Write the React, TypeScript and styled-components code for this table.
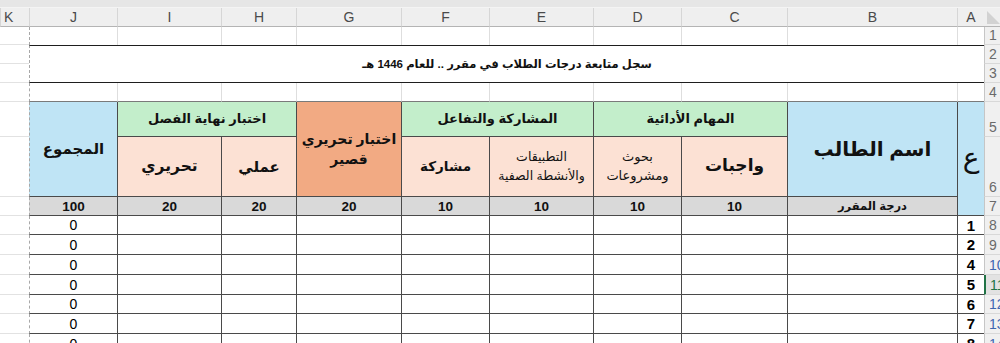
import React from 'react';
import styled, { createGlobalStyle, css } from 'styled-components';

const GlobalStyle = createGlobalStyle`
  html, body { margin: 0; padding: 0; background: #fff; }
  body { font-family: 'Liberation Sans', 'DejaVu Sans', sans-serif; }
`;

// right to left: row header, A .. K
const COLS = [16, 27, 170, 106, 88, 104, 88, 105, 75, 104, 88, 29];
const ROWS = [19, 18, 19, 19, 19, 35, 60, 19, 19, 20, 20, 20, 19, 20, 20];
const LETTERS = ['', 'A', 'B', 'C', 'D', 'E', 'F', 'G', 'H', 'I', 'J', 'K'];

const INK = '#4a4a4a';
const GRID = '#dedede';

const fills = {
  blue: '#bfe4f5',
  green: '#c3eecb',
  peach: '#fce1d4',
  orange: '#f2aa83',
  gray: '#d9d9d9',
};
type Fill = keyof typeof fills;

type Spot = { $c: number; $r: number; $cs?: number; $rs?: number; $edge?: boolean };

const Frame = styled.div`
  width: 1000px;
  height: 343px;
  overflow: hidden;
  background: #fff;
`;

const TopStrip = styled.div`
  height: 8px;
  box-sizing: border-box;
  background: #e6e6e6;
  border-bottom: 1px solid #f4f4f4;
`;

const Sheet = styled.div`
  display: grid;
  direction: rtl;
  grid-template-columns: ${COLS.map((w) => `${w}px`).join(' ')};
  grid-template-rows: ${ROWS.map((h) => `${h}px`).join(' ')};
`;

const Place = styled.div<Spot>`
  grid-column: ${(p) => p.$c} / span ${(p) => p.$cs ?? 1};
  grid-row: ${(p) => p.$r} / span ${(p) => p.$rs ?? 1};
  box-sizing: border-box;
  min-width: 0;
  min-height: 0;
  overflow: hidden;
  display: flex;
  align-items: center;
  justify-content: center;
`;

// dashed page break that runs down the left side of column J
const pageEdge = css<Spot>`
  ${(p) => p.$edge && 'border-left: 1px dashed #a8a8a8;'}
`;

const ColLetter = styled(Place)<{ $start?: boolean }>`
  background: #efefef;
  border-left: 1px solid #d6d6d6;
  border-bottom: 1px solid #b4b4b4;
  color: #4a4a4a;
  font-size: 14px;
  direction: ltr;
  justify-content: ${(p) => (p.$start ? 'flex-start' : 'center')};
  padding-left: ${(p) => (p.$start ? '3px' : '0')};
`;

const Corner = styled(Place)`
  background: #efefef;
  border-bottom: 1px solid #b4b4b4;
  direction: ltr;
  justify-content: flex-start;
  align-items: flex-end;
  padding: 0 0 2px 3px;
`;

const SelectAll = styled.span`
  width: 0;
  height: 0;
  border-bottom: 13px solid #d2d2d2;
  border-right: 13px solid transparent;
`;

const RowNum = styled(Place)<{ $tone?: 'plain' | 'blue' | 'active' }>`
  background: ${(p) => (p.$tone === 'active' ? '#e2e2e2' : '#f0f0f0')};
  border-left: ${(p) => (p.$tone === 'active' ? '2px solid #217346' : '1px solid #c6c6c6')};
  border-bottom: 1px solid #d8d8d8;
  direction: ltr;
  justify-content: flex-start;
  align-items: flex-end;
  padding: 0 0 1px 4px;
  white-space: nowrap;
  font-size: 14px;
  color: ${(p) => (p.$tone === 'blue' ? '#3f66b0' : p.$tone === 'active' ? '#217346' : '#6a6a6a')};
`;

const BlankCell = styled(Place)<{ $under?: string }>`
  background: #fff;
  border-left: 1px solid ${GRID};
  border-bottom: ${(p) => (p.$under ? `1px solid ${p.$under}` : 'none')};
  ${pageEdge}
`;

const OffPage = styled(Place)`
  background: #fff;
  border-bottom: 1px solid #e2e2e2;
`;

const Title = styled(Place)`
  background: #fff;
  border-top: 1px solid #1e1e1e;
  border-bottom: 1px solid #1e1e1e;
  font-size: 11.5px;
  font-weight: 700;
  color: #111;
  ${pageEdge}
`;

const HeadCell = styled(Place)<{ $fill: Fill; $size?: number; $weight?: number }>`
  background: ${(p) => fills[p.$fill]};
  border-left: 1px solid ${INK};
  border-bottom: 1px solid ${INK};
  font-size: ${(p) => p.$size ?? 13}px;
  font-weight: ${(p) => p.$weight ?? 700};
  line-height: 1.45;
  text-align: center;
  white-space: nowrap;
  color: #111;
  padding: 0 2px;
  ${pageEdge}
`;

const MaxCell = styled(Place)<{ $small?: boolean }>`
  background: ${fills.gray};
  border-left: 1px solid ${INK};
  border-bottom: 1px solid ${INK};
  font-size: ${(p) => (p.$small ? 11.5 : 13.5)}px;
  font-weight: 700;
  color: #111;
  ${pageEdge}
`;

const DataCell = styled(Place)<{ $bold?: boolean }>`
  background: #fff;
  border-left: 1px solid ${INK};
  border-bottom: 1px solid ${INK};
  font-size: ${(p) => (p.$bold ? 15 : 14)}px;
  font-weight: ${(p) => (p.$bold ? 700 : 400)};
  color: #000;
  ${pageEdge}
`;

type Head = { c: number; r: number; cs?: number; rs?: number; fill: Fill; size?: number; weight?: number; lines: string[] };

const HEADS: Head[] = [
  { c: 11, r: 6, rs: 2, fill: 'blue', size: 15, lines: ['المجموع'] },
  { c: 9, r: 6, cs: 2, fill: 'green', size: 13, lines: ['اختبار نهاية الفصل'] },
  { c: 10, r: 7, fill: 'peach', size: 15.5, lines: ['تحريري'] },
  { c: 9, r: 7, fill: 'peach', size: 15, lines: ['عملي'] },
  { c: 8, r: 6, rs: 2, fill: 'orange', size: 14, lines: ['اختبار تحريري', 'قصير'] },
  { c: 6, r: 6, cs: 2, fill: 'green', size: 13, lines: ['المشاركة والتفاعل'] },
  { c: 7, r: 7, fill: 'peach', size: 13.5, lines: ['مشاركة'] },
  { c: 6, r: 7, fill: 'peach', size: 12.5, weight: 400, lines: ['التطبيقات', 'والأنشطة الصفية'] },
  { c: 4, r: 6, cs: 2, fill: 'green', size: 13, lines: ['المهام الأدائية'] },
  { c: 5, r: 7, fill: 'peach', size: 13, weight: 400, lines: ['بحوث', 'ومشروعات'] },
  { c: 4, r: 7, fill: 'peach', size: 17, lines: ['واجبات'] },
  { c: 3, r: 6, rs: 2, fill: 'blue', size: 20, lines: ['اسم الطالب'] },
  { c: 2, r: 6, rs: 3, fill: 'blue', size: 28, weight: 400, lines: ['ع'] },
];

const MAX = ['100', '20', '20', '20', '10', '10', '10', '10'];
const INDEX = [1, 2, 4, 5, 6, 7, 8];
const rowTone = (n: number) => (n === 11 ? 'active' : n >= 10 ? 'blue' : 'plain');

export default function App() {
  return (
    <Frame>
      <GlobalStyle />
      <TopStrip />
      <Sheet>
        <Corner $c={1} $r={1}>
          <SelectAll />
        </Corner>
        {LETTERS.slice(1).map((l, i) => (
          <ColLetter key={l} $c={i + 2} $r={1} $start={l === 'K'}>
            {l}
          </ColLetter>
        ))}

        {ROWS.slice(1).map((_, i) => (
          <RowNum key={`n${i}`} $c={1} $r={i + 2} $tone={rowTone(i + 1)}>
            {i + 1}
          </RowNum>
        ))}
        {ROWS.slice(1).map((_, i) => (
          <OffPage key={`k${i}`} $c={12} $r={i + 2} />
        ))}

        {LETTERS.slice(1, 11).map((l, i) => (
          <BlankCell key={`r1${l}`} $c={i + 2} $r={2} $edge={l === 'J'} />
        ))}
        <Title $c={2} $cs={10} $r={3} $rs={2} $edge>
          سجل متابعة درجات الطلاب في مقرر .. للعام 1446 هـ
        </Title>
        {LETTERS.slice(1, 11).map((l, i) => (
          <BlankCell key={`r4${l}`} $c={i + 2} $r={5} $edge={l === 'J'} $under="#7a7a7a" />
        ))}

        {HEADS.map((h) => (
          <HeadCell
            key={`${h.c}-${h.r}`}
            $c={h.c}
            $r={h.r}
            $cs={h.cs}
            $rs={h.rs}
            $edge={h.c === 11}
            $fill={h.fill}
            $size={h.size}
            $weight={h.weight}
          >
            <div>
              {h.lines.map((t) => (
                <div key={t}>{t}</div>
              ))}
            </div>
          </HeadCell>
        ))}

        {MAX.map((v, i) => (
          <MaxCell key={`m${i}`} $c={11 - i} $r={8} $edge={i === 0}>
            {v}
          </MaxCell>
        ))}
        <MaxCell $c={3} $r={8} $small>
          درجة المقرر
        </MaxCell>

        {INDEX.map((n, ri) => (
          <React.Fragment key={`d${n}`}>
            <DataCell $c={11} $r={9 + ri} $edge>
              0
            </DataCell>
            {[10, 9, 8, 7, 6, 5, 4, 3].map((c) => (
              <DataCell key={c} $c={c} $r={9 + ri} />
            ))}
            <DataCell $c={2} $r={9 + ri} $bold>
              {n}
            </DataCell>
          </React.Fragment>
        ))}
      </Sheet>
    </Frame>
  );
}
